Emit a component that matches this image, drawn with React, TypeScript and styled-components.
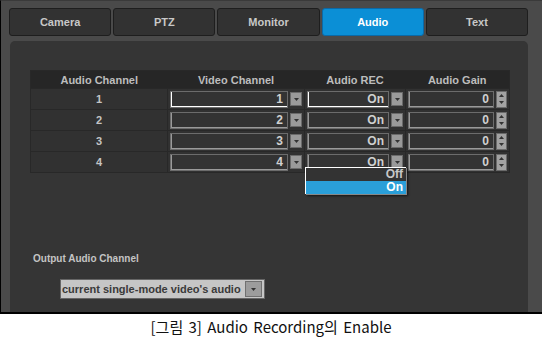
import React from 'react'
import styled, { createGlobalStyle } from 'styled-components'

const colors = {
  frame: '#4a4a4a',
  panel: '#353535',
  tab: '#323232',
  tabBorder: '#1e1e1e',
  blue: '#0b8fd6',
  text: '#c8c8c8',
  line: '#282828'
}

const GlobalStyle = createGlobalStyle`
  html, body {
    margin: 0;
    padding: 0;
    background: #ffffff;
  }
  body {
    font-family: 'Liberation Sans', Arial, sans-serif;
  }
`

const Page = styled.div`
  width: 542px;
  height: 339px;
  display: flex;
  flex-direction: column;
`
const Screen = styled.div`
  box-sizing: border-box;
  width: 542px;
  height: 314px;
  background: ${colors.frame};
  border-left: 1px solid #000;
  border-top: 1px solid #3a3a3a;
  border-bottom: 2px solid #000;
  padding: 7px 14px 0 8px;
  display: flex;
  flex-direction: column;
`
const TabBar = styled.div`
  display: flex;
  gap: 2px;
  height: 28px;
`
const Tab = styled.div<{ $active?: boolean }>`
  flex: 1;
  display: flex;
  align-items: center;
  justify-content: center;
  border: 1px solid ${p => (p.$active ? '#0a6aa8' : colors.tabBorder)};
  border-radius: 3px;
  background: ${p => (p.$active ? colors.blue : colors.tab)};
  color: ${p => (p.$active ? '#ffffff' : colors.text)};
  font-size: 11px;
  font-weight: bold;
`
const Panel = styled.div`
  flex: 1;
  margin-top: 5px;
  margin-left: 1px;
  background: ${colors.panel};
  border-radius: 5px 5px 0 0;
  padding: 29px 19px 0 20px;
  display: flex;
  flex-direction: column;
`
const TableWrap = styled.div`
  position: relative;
  width: 479px;
`
const Table = styled.table`
  width: 479px;
  border-collapse: collapse;
  table-layout: fixed;
  background: #313131;
  border: 1px solid ${colors.line};
`
const Head = styled.th`
  height: 17px;
  padding: 0;
  background: #262626;
  color: #bdbdbd;
  font-size: 11px;
  font-weight: bold;
  text-align: center;
`
const Cell = styled.td<{ $center?: boolean }>`
  height: 20px;
  padding: 0 2px;
  border-top: 1px solid ${colors.line};
  border-right: 1px solid ${colors.line};
  color: #c4c4c4;
  font-size: 11px;
  font-weight: bold;
  text-align: ${p => (p.$center ? 'center' : 'left')};
`
const Control = styled.div`
  display: flex;
  align-items: center;
  gap: 2px;
`
const Field = styled.div<{ $focus?: boolean }>`
  flex: 1;
  box-sizing: border-box;
  height: 17px;
  border: 1px solid #6c6c6c;
  box-shadow: inset 1px -1px 0 ${p => (p.$focus ? '#ffffff' : '#9a9a9a')};
  background: #333333;
  color: #d0d0d0;
  font-size: 12px;
  font-weight: bold;
  text-align: right;
  line-height: 15px;
  padding-right: 4px;
`
const ArrowBtn = styled.div`
  box-sizing: border-box;
  width: 12px;
  height: 14px;
  background: #9a9a9a;
  border: 1px solid #6a6a6a;
  display: flex;
  align-items: center;
  justify-content: center;
`
const Spinner = styled.div`
  box-sizing: border-box;
  width: 11px;
  height: 17px;
  background: #a2a2a2;
  border: 1px solid #6a6a6a;
  display: flex;
  flex-direction: column;
  align-items: center;
  justify-content: space-around;
`
const Menu = styled.div`
  position: absolute;
  left: 275px;
  top: 97px;
  width: 100px;
  background: #333333;
  border-left: 1px solid #ffffff;
  border-top: 1px solid #ffffff;
  box-shadow: 1px 1px 0 #888, 2px 2px 2px rgba(0, 0, 0, 0.6);
`
const MenuItem = styled.div<{ $selected?: boolean }>`
  height: 13px;
  line-height: 13px;
  padding-right: 3px;
  text-align: right;
  font-size: 12px;
  font-weight: bold;
  color: ${p => (p.$selected ? '#ffffff' : '#c8c8c8')};
  background: ${p => (p.$selected ? '#2a9fd9' : 'transparent')};
`
const OutputLabel = styled.div`
  margin-top: 80px;
  margin-left: 3px;
  color: #c4c4c4;
  font-size: 10px;
  font-weight: bold;
`
const OutputSelect = styled.div`
  margin-top: 15px;
  margin-left: 30px;
  box-sizing: border-box;
  width: 205px;
  height: 20px;
  display: flex;
  align-items: center;
  background: #c6c6c6;
  border: 1px solid #666;
  padding: 0 2px 0 1px;
  color: #3a3a3a;
  font-size: 11px;
  font-weight: bold;
  white-space: nowrap;
`
const SelectText = styled.span`
  flex: 1;
  overflow: hidden;
`
const BigArrow = styled.div`
  box-sizing: border-box;
  width: 17px;
  height: 16px;
  background: #9c9c9c;
  border: 1px solid #707070;
  display: flex;
  align-items: center;
  justify-content: center;
`
const Caption = styled.div`
  flex: 1;
  display: flex;
  align-items: center;
  justify-content: center;
  font-family: 'Noto Sans CJK KR', 'Noto Sans', sans-serif;
  font-size: 15px;
  color: #111;
  word-spacing: 2px;
`

const Down = () => (
  <svg width="5" height="3" viewBox="0 0 5 3">
    <path d="M0 0h5L2.5 3z" fill="#333" />
  </svg>
)
const Up = () => (
  <svg width="5" height="3" viewBox="0 0 5 3">
    <path d="M0 3h5L2.5 0z" fill="#333" />
  </svg>
)

const rows = [1, 2, 3, 4]
const tabs = ['Camera', 'PTZ', 'Monitor', 'Audio', 'Text']

const App: React.FC = () => {
  return (
    <Page>
      <GlobalStyle />
      <Screen>
        <TabBar>
          {tabs.map(t => (
            <Tab key={t} $active={t === 'Audio'}>
              {t}
            </Tab>
          ))}
        </TabBar>
        <Panel>
          <TableWrap>
            <Table>
              <colgroup>
                <col style={{ width: 137 }} />
                <col style={{ width: 137 }} />
                <col style={{ width: 101 }} />
                <col style={{ width: 104 }} />
              </colgroup>
              <thead>
                <tr>
                  <Head>Audio Channel</Head>
                  <Head>Video Channel</Head>
                  <Head>Audio REC</Head>
                  <Head>Audio Gain</Head>
                </tr>
              </thead>
              <tbody>
                {rows.map(n => (
                  <tr key={n}>
                    <Cell $center>{n}</Cell>
                    <Cell>
                      <Control>
                        <Field $focus={n === 1}>{n}</Field>
                        <ArrowBtn>
                          <Down />
                        </ArrowBtn>
                      </Control>
                    </Cell>
                    <Cell>
                      <Control>
                        <Field $focus={n === 1}>On</Field>
                        <ArrowBtn>
                          <Down />
                        </ArrowBtn>
                      </Control>
                    </Cell>
                    <Cell>
                      <Control>
                        <Field>0</Field>
                        <Spinner>
                          <Up />
                          <Down />
                        </Spinner>
                      </Control>
                    </Cell>
                  </tr>
                ))}
              </tbody>
            </Table>
            <Menu>
              <MenuItem>Off</MenuItem>
              <MenuItem $selected>On</MenuItem>
            </Menu>
          </TableWrap>
          <OutputLabel>Output Audio Channel</OutputLabel>
          <OutputSelect>
            <SelectText>current single-mode video's audio</SelectText>
            <BigArrow>
              <Down />
            </BigArrow>
          </OutputSelect>
        </Panel>
      </Screen>
      <Caption>[그림 3] Audio Recording의 Enable</Caption>
    </Page>
  )
}

export default App
